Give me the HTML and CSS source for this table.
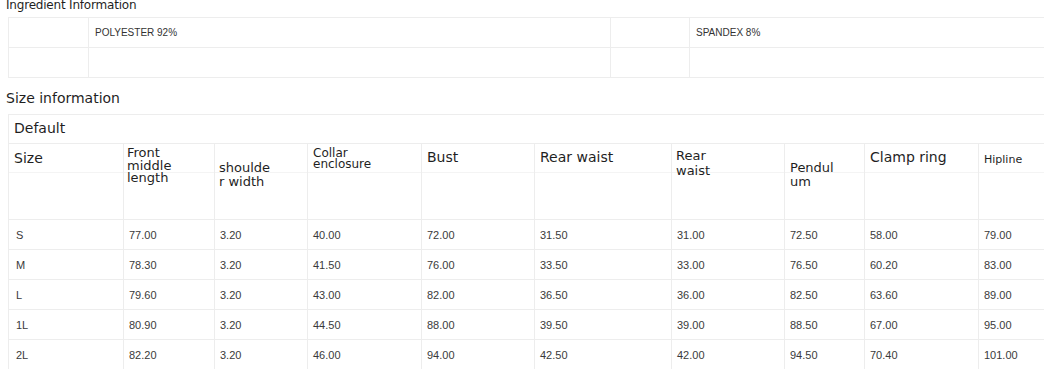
FILE: index.html
```html
<!DOCTYPE html>
<html lang="en">
<head>
<meta charset="utf-8">
<title>Size chart</title>
<link rel="stylesheet" href="styles.css">
</head>
<body>
<h2 class="title title-ingredient">Ingredient Information</h2>
<div class="ing-table">
  <div class="ing-cell"></div>
  <div class="ing-cell">POLYESTER 92%</div>
  <div class="ing-cell"></div>
  <div class="ing-cell">SPANDEX 8%</div>
  <div class="ing-cell"></div>
  <div class="ing-cell"></div>
  <div class="ing-cell"></div>
  <div class="ing-cell"></div>
</div>

<h2 class="title title-size">Size information</h2>
<div class="size-table">
  <div class="default-row">Default</div>

  <div class="hd hd-size">Size</div>
  <div class="hd hd-front"><span>Front middle length</span></div>
  <div class="hd hd-shoulder"><span>shoulder width</span></div>
  <div class="hd hd-collar"><span>Collar enclosure</span></div>
  <div class="hd hd-big">Bust</div>
  <div class="hd hd-big">Rear waist</div>
  <div class="hd hd-rear"><span>Rear waist</span></div>
  <div class="hd hd-pendulum"><span>Pendulum</span></div>
  <div class="hd hd-big">Clamp ring</div>
  <div class="hd hd-hip">Hipline</div>

  <div class="td td-first">S</div><div class="td">77.00</div><div class="td">3.20</div><div class="td">40.00</div><div class="td">72.00</div><div class="td">31.50</div><div class="td">31.00</div><div class="td">72.50</div><div class="td">58.00</div><div class="td">79.00</div>
  <div class="td td-first">M</div><div class="td">78.30</div><div class="td">3.20</div><div class="td">41.50</div><div class="td">76.00</div><div class="td">33.50</div><div class="td">33.00</div><div class="td">76.50</div><div class="td">60.20</div><div class="td">83.00</div>
  <div class="td td-first">L</div><div class="td">79.60</div><div class="td">3.20</div><div class="td">43.00</div><div class="td">82.00</div><div class="td">36.50</div><div class="td">36.00</div><div class="td">82.50</div><div class="td">63.60</div><div class="td">89.00</div>
  <div class="td td-first">1L</div><div class="td">80.90</div><div class="td">3.20</div><div class="td">44.50</div><div class="td">88.00</div><div class="td">39.50</div><div class="td">39.00</div><div class="td">88.50</div><div class="td">67.00</div><div class="td">95.00</div>
  <div class="td td-first">2L</div><div class="td">82.20</div><div class="td">3.20</div><div class="td">46.00</div><div class="td">94.00</div><div class="td">42.50</div><div class="td">42.00</div><div class="td">94.50</div><div class="td">70.40</div><div class="td">101.00</div>
</div>
</body>
</html>
```

FILE: styles.css
```css
* { box-sizing: border-box; }

html, body {
  margin: 0;
  padding: 0;
  background: #fff;
  overflow: hidden;
}

body {
  font-family: "DejaVu Sans", sans-serif;
  color: #1f1f1f;
}

.title {
  font-weight: normal;
  margin: 0;
  padding-left: 6px;
}

.title-ingredient {
  font-size: 12px;
  line-height: 14px;
  margin-top: -2px;
  letter-spacing: -0.2px;
}

.title-size {
  font-size: 14px;
  line-height: 16px;
  margin-top: 12px;
}

.ing-table {
  margin: 5px 0 0 8px;
  width: 1060px;
  display: grid;
  grid-template-columns: 80px 522px 79px 1fr;
  grid-auto-rows: 30px;
  border-top: 1px solid #ededed;
  border-left: 1px solid #ededed;
}

.ing-cell {
  border-right: 1px solid #ededed;
  border-bottom: 1px solid #ededed;
  font-family: "Liberation Sans", Arial, sans-serif;
  font-size: 10px;
  color: #333;
  display: flex;
  align-items: center;
  padding-left: 6px;
}

.size-table {
  margin: 8px 0 0 8px;
  width: 1060px;
  display: grid;
  grid-template-columns: 115px 91px 93px 114px 113px 137px 113px 80px 114px 1fr;
  grid-template-rows: 29px 76px;
  grid-auto-rows: 30px;
  border-top: 1px solid #ededed;
  border-left: 1px solid #ededed;
}

.default-row {
  grid-column: 1 / -1;
  border-bottom: 1px solid #ededed;
  font-size: 14px;
  line-height: 16px;
  padding: 5px 0 0 5px;
}

.hd {
  border-right: 1px solid #ededed;
  border-bottom: 1px solid #ededed;
  padding-left: 4px;
  background: linear-gradient(to bottom, transparent 28px, #f4f4f4 28px, #f4f4f4 29px, transparent 29px);
}

.hd span { display: block; }

.hd-size {
  font-size: 14px;
  line-height: 16px;
  padding-top: 6px;
  padding-left: 5px;
}

.hd-big {
  font-size: 14px;
  line-height: 16px;
  padding-top: 5px;
  padding-left: 5px;
}

.hd-front {
  font-size: 13px;
  line-height: 12.5px;
  padding-top: 3px;
  padding-left: 3px;
}
.hd-front span { max-width: 50px; }

.hd-shoulder {
  font-size: 13px;
  line-height: 14px;
  padding-top: 17px;
}
.hd-shoulder span { max-width: 53px; word-break: break-all; }

.hd-collar {
  font-size: 12px;
  line-height: 11px;
  padding-top: 4px;
  padding-left: 5px;
}
.hd-collar span { max-width: 70px; }

.hd-rear {
  font-size: 13px;
  line-height: 15px;
  padding-top: 4px;
}
.hd-rear span { max-width: 50px; }

.hd-pendulum {
  font-size: 13px;
  line-height: 14px;
  padding-top: 17px;
  padding-left: 5px;
}
.hd-pendulum span { max-width: 50px; word-break: break-all; }

.hd-hip {
  font-size: 11px;
  line-height: 13px;
  padding-top: 9px;
  padding-left: 5px;
}

.td {
  border-right: 1px solid #ededed;
  border-bottom: 1px solid #ededed;
  font-family: "Liberation Sans", Arial, sans-serif;
  font-size: 11px;
  color: #3a3a3a;
  display: flex;
  align-items: center;
  padding-left: 5px;
}

.td-first { padding-left: 7px; }
```
